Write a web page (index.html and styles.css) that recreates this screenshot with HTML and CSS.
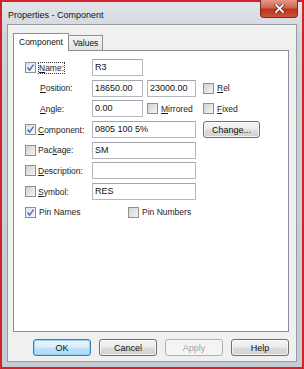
FILE: index.html
```html
<!DOCTYPE html>
<html lang="en">
<head>
  <meta charset="UTF-8">
  <title>Properties - Component</title>
  <link rel="stylesheet" href="styles.css">
</head>
<body>
  <div class="window">
    <!-- title bar -->
    <div class="titlebar">Properties - Component</div>
    <div class="close-btn">
      <svg width="11" height="9" viewBox="0 0 11 9">
        <path d="M2 1 L9 8 M9 1 L2 8" stroke="#5a2018" stroke-width="3.2" stroke-linecap="square"/>
        <path d="M2 1 L9 8 M9 1 L2 8" stroke="#fff" stroke-width="1.8" stroke-linecap="square"/>
      </svg>
    </div>

    <div class="client">
      <div class="tabs">
        <div class="tab active">Component</div>
        <div class="tab">Values</div>
      </div>

      <div class="panel">
        <div class="row">
          <div class="lead"><span class="cb checked"><svg width="9" height="9" viewBox="0 0 9 9"><path d="M1.5 4.5 L3.6 7 L7.6 1.6" fill="none" stroke="#4a6fc4" stroke-width="1.4"/></svg></span><span class="focus"><u>N</u>ame:</span></div>
          <div class="field short">R3</div>
        </div>
        <div class="row">
          <div class="lead indent"><u>P</u>osition:</div>
          <div class="field short">18650.00</div>
          <div class="field second">23000.00</div>
          <div class="check"><span class="cb"></span><u>R</u>el</div>
        </div>
        <div class="row">
          <div class="lead indent"><u>A</u>ngle:</div>
          <div class="field short">0.00</div>
          <div class="check"><span class="cb"></span><u>M</u>irrored</div>
          <div class="check"><span class="cb"></span><u>F</u>ixed</div>
        </div>
        <div class="row">
          <div class="lead"><span class="cb checked"><svg width="9" height="9" viewBox="0 0 9 9"><path d="M1.5 4.5 L3.6 7 L7.6 1.6" fill="none" stroke="#4a6fc4" stroke-width="1.4"/></svg></span><u>C</u>omponent:</div>
          <div class="field wide">0805 100 5%</div>
          <button class="btn change">Change...</button>
        </div>
        <div class="row">
          <div class="lead"><span class="cb"></span>Pac<u>k</u>age:</div>
          <div class="field wide">SM</div>
        </div>
        <div class="row">
          <div class="lead"><span class="cb"></span><u>D</u>escription:</div>
          <div class="field wide"></div>
        </div>
        <div class="row">
          <div class="lead"><span class="cb"></span><u>S</u>ymbol:</div>
          <div class="field wide">RES</div>
        </div>
        <div class="pin-row">
          <div class="check pin-names"><span class="cb checked"><svg width="9" height="9" viewBox="0 0 9 9"><path d="M1.5 4.5 L3.6 7 L7.6 1.6" fill="none" stroke="#4a6fc4" stroke-width="1.4"/></svg></span>Pin Names</div>
          <div class="check"><span class="cb"></span>Pin Numbers</div>
        </div>
      </div>

      <div class="buttons">
        <button class="btn default">OK</button>
        <button class="btn">Cancel</button>
        <button class="btn disabled">Apply</button>
        <button class="btn">Help</button>
      </div>
    </div>
  </div>
</body>
</html>
```

FILE: styles.css
```css
* {
  margin: 0;
  padding: 0;
  box-sizing: border-box;
}

body {
  font-family: "Liberation Sans", Arial, sans-serif;
  background: #fff;
}

/* window frame */
.window {
  position: relative;
  width: 304px;
  height: 369px;
  border: 2px solid #d2222c;
  padding: 0 5px 5px;
  background: linear-gradient(#e2e5e9, #cdd2d7 40px, #c6cbd1);
  display: flex;
  flex-direction: column;
}

.titlebar {
  height: 22px;
  padding-left: 1px;
  font-size: 9px;
  line-height: 26px;
  color: #111;
}

.close-btn {
  position: absolute;
  top: -2px;
  right: 4px;
  width: 38px;
  height: 18px;
  border: 1px solid #7b2b22;
  border-top: none;
  border-radius: 0 0 4px 4px;
  background: linear-gradient(#e49a8a, #d26450 45%, #bd331c 55%, #cf5236);
  display: flex;
  align-items: center;
  justify-content: center;
}

.client {
  flex: 1;
  border: 1px solid #959ba2;
  background: #f0f0f0;
  padding: 8px 7px 0 5px;
}

/* tabs */
.tabs {
  display: flex;
  align-items: flex-end;
  height: 17px;
}

.tab {
  height: 15px;
  padding: 0 4px;
  border: 1px solid #8c9098;
  border-bottom: none;
  background: linear-gradient(#f5f5f5, #e2e2e2);
  font-size: 8.5px;
  line-height: 15px;
  color: #111;
  margin-left: -1px;
}

.tab.active {
  position: relative;
  height: 18px;
  width: 56px;
  margin: 0 0 -1px 0;
  padding: 0 5px;
  background: #fff;
  line-height: 16px;
  z-index: 1;
}

.panel {
  height: 282px;
  background: #fff;
  border: 1px solid #8c9098;
  padding: 8px 0 0 11px;
  display: flex;
  flex-direction: column;
  gap: 3.7px;
}

/* form rows */
.row {
  display: grid;
  grid-template-columns: 67px 55px 56px auto;
  height: 17px;
  align-items: center;
  font-size: 8.5px;
  color: #1c1c1c;
}

.lead {
  display: flex;
  align-items: center;
  white-space: nowrap;
}

.lead.indent {
  padding-left: 15px;
}

.focus {
  outline: 1px dotted #333;
  outline-offset: 0;
  margin-left: 1px;
}

.cb {
  width: 11px;
  height: 11px;
  margin-right: 2px;
  border: 1px solid #8e8f8f;
  background: linear-gradient(135deg, #d2d2d2, #f4f4f4);
  display: flex;
  align-items: center;
  justify-content: center;
  flex-shrink: 0;
}

.cb.checked {
  background: linear-gradient(135deg, #dfe3e8, #f7f8f9);
}

.field {
  height: 17px;
  border: 1px solid #b4b7bd;
  border-top-color: #a2a5ab;
  background: #fff;
  padding-left: 2px;
  font-size: 9px;
  line-height: 15px;
  color: #111;
}

.field.short {
  width: 51px;
}

.field.second {
  width: 49px;
}

.field.wide {
  grid-column: span 2;
  width: 104px;
}

.check {
  display: flex;
  align-items: center;
  white-space: nowrap;
}

.check .cb {
  margin-right: 3px;
}

.pin-row {
  display: flex;
  align-items: center;
  height: 17px;
  font-size: 8.5px;
  color: #1c1c1c;
}

.pin-names {
  width: 103px;
}

/* buttons */
.btn {
  width: 58px;
  height: 17px;
  border: 1px solid #707070;
  border-radius: 3px;
  background: linear-gradient(#f4f4f4, #ebebeb 48%, #dcdcdc 52%, #d0d0d0);
  font-family: "Liberation Sans", Arial, sans-serif;
  font-size: 9px;
  color: #111;
  box-shadow: inset 0 0 0 1px rgba(255, 255, 255, 0.7);
}

.btn.change {
  width: 57px;
}

.btn.default {
  border-color: #3c7fb1;
  background: linear-gradient(#eaf5fc, #d9eefb 48%, #bee6fd 52%, #a7d9f5);
  box-shadow: inset 0 0 0 1px #96d0f0;
}

.btn.disabled {
  border-color: #adb2b5;
  background: #f4f4f4;
  color: #a3a3a3;
  box-shadow: none;
}

.buttons {
  display: flex;
  justify-content: flex-end;
  gap: 8px;
  margin-top: 7px;
}
```
